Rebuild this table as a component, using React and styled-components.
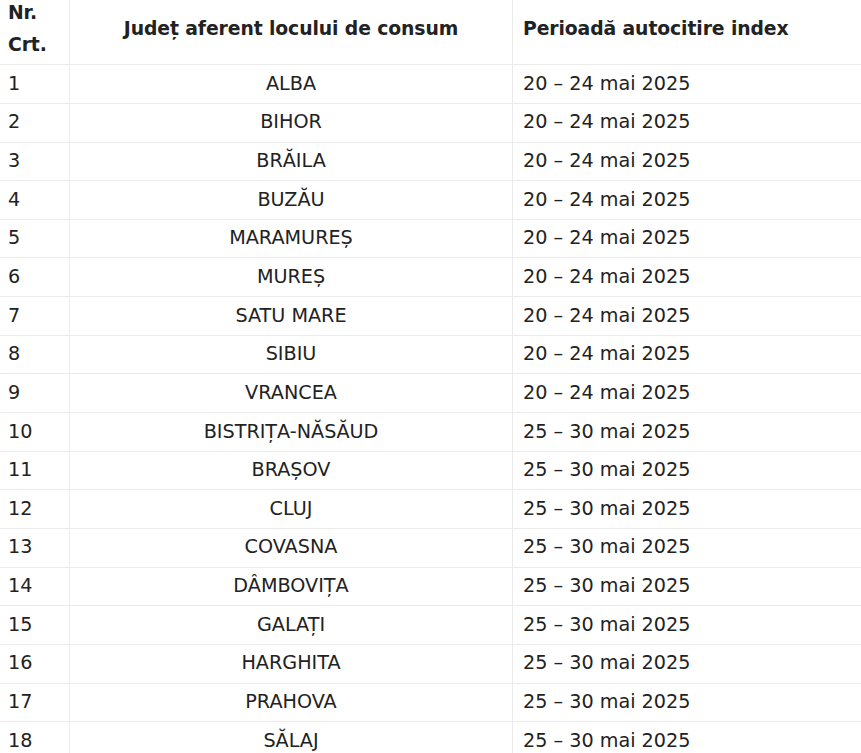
import React from "react";
import styled, { createGlobalStyle } from "styled-components";

const Global = createGlobalStyle`
  html, body {
    margin: 0;
    padding: 0;
    background: #fff;
    overflow: hidden;
  }
  body {
    font-family: "DejaVu Sans", Verdana, sans-serif;
    color: #222;
  }
`;

const Frame = styled.div`
  width: 861px;
  height: 753px;
  overflow: hidden;
`;

const Table = styled.table`
  border-collapse: collapse;
  table-layout: fixed;
  width: 870px;
  margin: -7px 0 0 -3px;
  font-size: 19.2px;
  line-height: 32.64px;
  color: #222;
`;

const Col = styled.col`
  width: ${(p) => p.$w}px;
`;

const Th = styled.th`
  border: 1px solid #ebebeb;
  padding: 2.5px 10px;
  font-weight: bold;
  font-size: 18.8px;
  letter-spacing: -0.1px;
  vertical-align: middle;
  text-align: ${(p) => p.$align || "left"};
`;

const Td = styled.td`
  border: 1px solid #ebebeb;
  padding: 2.5px 10px;
  vertical-align: middle;
  text-align: ${(p) => p.$align || "left"};
  white-space: nowrap;
`;

const A = "20 – 24 mai 2025";
const B = "25 – 30 mai 2025";

const rows = [
  ["ALBA", A],
  ["BIHOR", A],
  ["BRĂILA", A],
  ["BUZĂU", A],
  ["MARAMUREȘ", A],
  ["MUREȘ", A],
  ["SATU MARE", A],
  ["SIBIU", A],
  ["VRANCEA", A],
  ["BISTRIȚA-NĂSĂUD", B],
  ["BRAȘOV", B],
  ["CLUJ", B],
  ["COVASNA", B],
  ["DÂMBOVIȚA", B],
  ["GALAȚI", B],
  ["HARGHITA", B],
  ["PRAHOVA", B],
  ["SĂLAJ", B],
];

export default function App() {
  return (
    <>
      <Global />
      <Frame>
        <Table>
          <colgroup>
            <Col $w={72} />
            <Col $w={443} />
            <Col $w={355} />
          </colgroup>
          <thead>
            <tr>
              <Th>Nr. Crt.</Th>
              <Th $align="center">Județ aferent locului de consum</Th>
              <Th>Perioadă autocitire index</Th>
            </tr>
          </thead>
          <tbody>
            {rows.map(([county, period], i) => (
              <tr key={county}>
                <Td>{i + 1}</Td>
                <Td $align="center">{county}</Td>
                <Td>{period}</Td>
              </tr>
            ))}
          </tbody>
        </Table>
      </Frame>
    </>
  );
}
